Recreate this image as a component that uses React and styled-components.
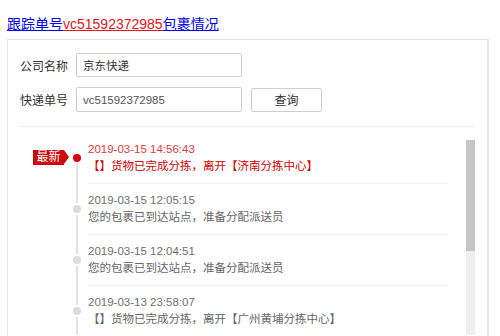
import React from 'react';
import styled, { createGlobalStyle } from 'styled-components';

const Global = createGlobalStyle`
    html, body {
        margin: 0;
        padding: 0;
        background: #fff;
        font-family: "Liberation Sans", "Noto Sans CJK SC", sans-serif;
    }
`;

const Page = styled.div`
    padding: 14px 7px 0 7px;
    width: 482px;
`;

const Title = styled.a`
    display: block;
    font-size: 14px;
    line-height: 20px;
    color: #0000ee;
    text-decoration: underline;
    cursor: pointer;
`;

const Num = styled.span`
    color: #e4141b;
    text-decoration: underline;
`;

const Panel = styled.div`
    margin-top: 5px;
    border: 1px solid #e6e6e6;
    border-right-width: 2px;
    border-bottom: none;
    padding: 13px 12px 0 12px;
`;

const Row = styled.div`
    display: flex;
    align-items: center;
    margin-bottom: ${p => p.$last ? '14px' : '10px'};
`;

const Label = styled.label`
    width: 56px;
    font-size: 12px;
    color: #333;
`;

const Input = styled.input`
    box-sizing: border-box;
    width: 166px;
    height: ${p => p.$tall ? '25px' : '24px'};
    border: 1px solid #cfcfcf;
    border-radius: 2px;
    padding: 0 6px;
    font-family: inherit;
    font-size: 11.5px;
    color: ${p => p.$num ? '#555' : '#333'};
    outline: none;
`;

const Button = styled.button`
    box-sizing: border-box;
    margin-left: 9px;
    width: 71px;
    height: 24px;
    border: 1px solid #cfcfcf;
    border-radius: 2px;
    background: #fff;
    font-family: inherit;
    font-size: 12px;
    color: #333;
`;

const Scroller = styled.div`
    display: flex;
    border-top: 1px solid #eeeeee;
    height: 209px;
    box-sizing: border-box;
`;

const List = styled.ul`
    flex: 1;
    overflow: hidden;
    list-style: none;
    margin: 0;
    padding: 6px 18px 0 0;
`;

const Track = styled.div`
    width: 9px;
    margin-top: 13px;
    background: #efefef;
`;

const Thumb = styled.div`
    height: 111px;
    background: #c6c6c6;
`;

const Item = styled.li`
    position: relative;
    padding-left: 68px;

    &::before {
        content: "";
        position: absolute;
        left: 56px;
        top: ${p => p.$first ? '24px' : '0'};
        bottom: 0;
        width: 2px;
        background: #e3e3e3;
    }
`;

const Body = styled.div`
    padding: 8px 0;
    border-bottom: 1px solid #f0f0f0;
    font-size: 11.5px;
    line-height: 17px;
`;

const Time = styled.div`
    color: ${p => p.$active ? '#e4393c' : '#6f6f6f'};
`;

const Desc = styled.div`
    color: ${p => p.$active ? '#d20000' : '#666'};
`;

const Dot = styled.span`
    position: absolute;
    left: 51px;
    top: 19px;
    width: 8px;
    height: 8px;
    border: 2px solid #fff;
    border-radius: 50%;
    background: ${p => p.$active ? '#d7000f' : '#dcdcdc'};
`;

const Badge = styled.span`
    position: absolute;
    left: 13px;
    top: 17px;
    height: 15px;
    width: 31px;
    background: #cc0a0a;
    color: #fff;
    font-size: 12px;
    line-height: 15px;
    text-align: center;

    &::after {
        content: "";
        position: absolute;
        right: -5px;
        top: 0;
        border-style: solid;
        border-width: 7.5px 0 7.5px 5px;
        border-color: transparent transparent transparent #cc0a0a;
    }
`;

const records = [
    { time: '2019-03-15 14:56:43', text: '【】货物已完成分拣，离开【济南分拣中心】' },
    { time: '2019-03-15 12:05:15', text: '您的包裹已到达站点，准备分配派送员' },
    { time: '2019-03-15 12:04:51', text: '您的包裹已到达站点，准备分配派送员' },
    { time: '2019-03-13 23:58:07', text: '【】货物已完成分拣，离开【广州黄埔分拣中心】' },
];

const App = () => {
    return (
        <Page>
            <Global />
            <Title>跟踪单号<Num>vc51592372985</Num>包裹情况</Title>
            <Panel>
                <Row>
                    <Label>公司名称</Label>
                    <Input defaultValue="京东快递" />
                </Row>
                <Row $last>
                    <Label>快递单号</Label>
                    <Input $num $tall defaultValue="vc51592372985" />
                    <Button>查询</Button>
                </Row>
                <Scroller>
                    <List>
                        {records.map((r, i) => (
                            <Item key={i} $first={i === 0}>
                                {i === 0 && <Badge>最新</Badge>}
                                <Dot $active={i === 0} />
                                <Body>
                                    <Time $active={i === 0}>{r.time}</Time>
                                    <Desc $active={i === 0}>{r.text}</Desc>
                                </Body>
                            </Item>
                        ))}
                    </List>
                    <Track>
                        <Thumb />
                    </Track>
                </Scroller>
            </Panel>
        </Page>
    );
};

export default App;
